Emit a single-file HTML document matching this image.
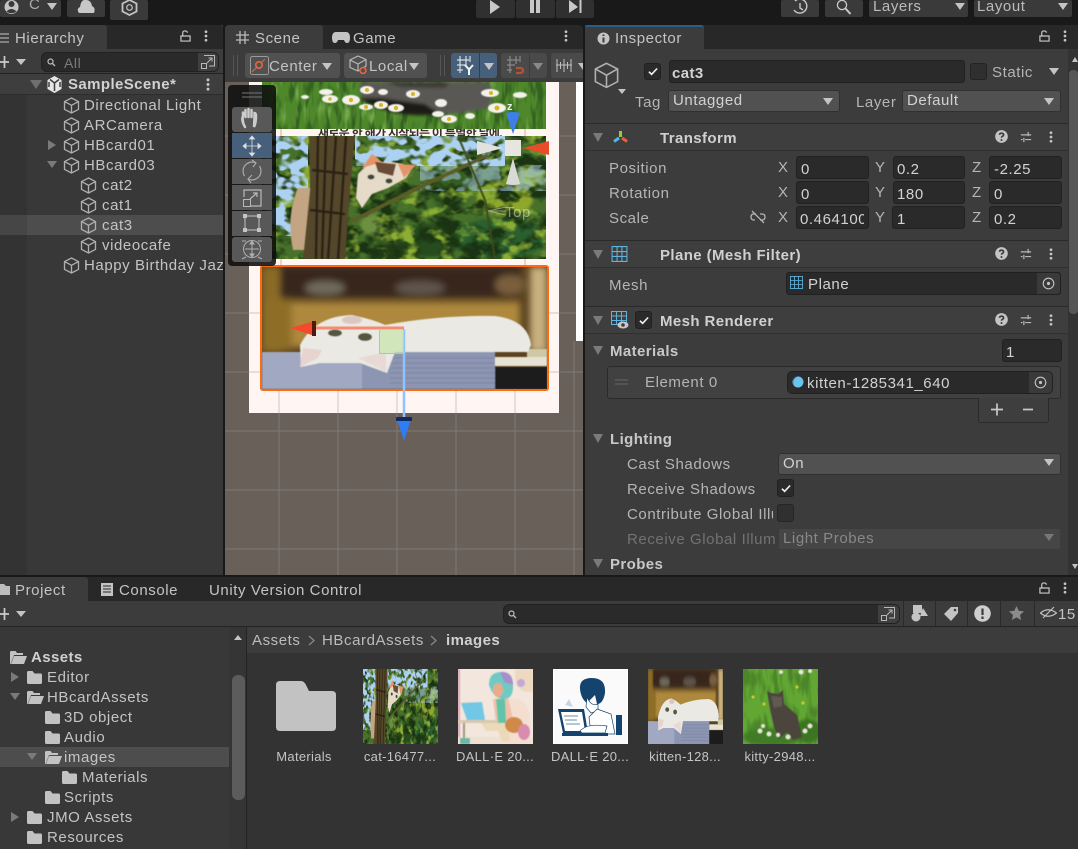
<!DOCTYPE html>
<html><head><meta charset="utf-8"><title>Unity Editor</title>
<style>
html,body{margin:0;padding:0;background:#191919}
#r{position:relative;width:1078px;height:849px;overflow:hidden;background:#191919;font-family:"Liberation Sans","Noto Sans CJK KR",sans-serif;font-size:15px;letter-spacing:.58px;color:#c4c4c4}
.a,.t,.f,.d,.b,svg.i{position:absolute;display:block}
.t{line-height:20px;height:20px;white-space:nowrap;margin-top:2px}
.bd{font-weight:bold;letter-spacing:.4px}
.dim{color:#bdbdbd}
.f{background:#2a2a2a;border:1px solid #212121;border-radius:3px;box-sizing:border-box;line-height:23px;padding-top:1px;padding-left:5px;overflow:hidden;white-space:nowrap;color:#d2d2d2}
.d{background:#515151;border:1px solid #303030;border-radius:3px;box-sizing:border-box;line-height:20px;padding-left:4px;color:#d2d2d2;white-space:nowrap}
.b{background:#3a3a3a;border-radius:2px}
.tr{position:absolute;width:0;height:0;border-left:5px solid transparent;border-right:5px solid transparent;border-top:7px solid #c4c4c4}
.trg{border-top-color:#7a7a7a}
.rt{position:absolute;width:0;height:0;border-top:5px solid transparent;border-bottom:5px solid transparent;border-left:8px solid #7a7a7a}
.l{font-size:13px;letter-spacing:.3px;text-align:center;width:90px;margin-top:0}
</style></head><body><div id="r">
<svg width="0" height="0" style="position:absolute"><defs>
<symbol id="cube" viewBox="0 0 17 17"><path d="M8.5 1 15.5 4.6V12.4L8.5 16 1.5 12.4V4.6ZM1.5 4.6 8.5 8.3 15.5 4.6M8.5 8.3V16" fill="none" stroke="#b0b0b0" stroke-width="1.3"/></symbol>
<symbol id="fold" viewBox="0 0 15 13"><path d="M0 1.5Q0 0 1.5 0H5.5L7.5 2.5H13.5Q15 2.5 15 4V11.5Q15 13 13.5 13H1.5Q0 13 0 11.5Z" fill="#c2c2c2"/></symbol>
<symbol id="open" viewBox="0 0 17 13"><path d="M0 1.5Q0 0 1.5 0H5.5L7 2H13V4H4L1 12V13H.8Q0 13 0 12Z" fill="#c2c2c2"/><path d="M4 5H17L14 13H1Z" fill="#c2c2c2"/></symbol>
<symbol id="keb" viewBox="0 0 4 14"><circle cx="2" cy="2" r="1.6" fill="#c4c4c4"/><circle cx="2" cy="7" r="1.6" fill="#c4c4c4"/><circle cx="2" cy="12" r="1.6" fill="#c4c4c4"/></symbol>
<symbol id="lock" viewBox="0 0 12 13"><path d="M1 6.5H11V12H1ZM3 6V3Q3 1 5.5 1T8 3" fill="none" stroke="#c8c8c8" stroke-width="1.3"/></symbol>
<symbol id="help" viewBox="0 0 14 14"><circle cx="7" cy="7" r="6.8" fill="#c4c4c4"/><path d="M4.8 5.2Q5 3.4 7 3.4 9.2 3.4 9.2 5.1 9.2 6.2 8 6.8 7 7.3 7 8.4" fill="none" stroke="#3c3c3c" stroke-width="1.8"/><circle cx="7" cy="10.8" r="1.1" fill="#3c3c3c"/></symbol>
<symbol id="sld" viewBox="0 0 14 14"><path d="M1 4.5H13M1 10H3M6 10H13M9.5 1V6M4.5 8V13" fill="none" stroke="#b8b8b8" stroke-width="1.4"/></symbol>
<symbol id="chk" viewBox="0 0 11 9"><path d="M1 4.8 4 7.6 10 1.2" fill="none" stroke="#eee" stroke-width="1.8"/></symbol>
<symbol id="grd" viewBox="0 0 17 17"><path d="M.6.6H16.4V16.4H.6ZM5.9.6V16.4M11.1.6V16.4M.6 5.9H16.4M.6 11.1H16.4" fill="none" stroke="#5fb5e0" stroke-width="1.1"/></symbol>
<symbol id="tgt" viewBox="0 0 14 14"><circle cx="7" cy="7" r="5.7" fill="none" stroke="#c4c4c4" stroke-width="1.2"/><circle cx="7" cy="7" r="1.7" fill="#c4c4c4"/></symbol>
<filter id="b1"><feGaussianBlur stdDeviation=".6"/></filter>
<filter id="b2"><feGaussianBlur stdDeviation="1.6"/></filter>
<filter id="b4"><feGaussianBlur stdDeviation="3.5"/></filter>
<filter id="nd" x="0" y="0" width="100%" height="100%" color-interpolation-filters="sRGB"><feTurbulence type="fractalNoise" baseFrequency=".05 .07" numOctaves="3" seed="7"/><feColorMatrix values="0 0 0 0 .1 0 0 0 0 .2 0 0 0 0 .07 4.500 0 0 0 -1.900"/></filter>
<filter id="ns" x="0" y="0" width="100%" height="100%" color-interpolation-filters="sRGB"><feTurbulence type="fractalNoise" baseFrequency=".07 .1" numOctaves="2" seed="21"/><feColorMatrix values="0 0 0 0 .68 0 0 0 0 .82 0 0 0 0 .95 8 0 0 0 -3.400"/></filter>
<filter id="nl" x="0" y="0" width="100%" height="100%" color-interpolation-filters="sRGB"><feTurbulence type="fractalNoise" baseFrequency=".05 .07" numOctaves="3" seed="33"/><feColorMatrix values="0 0 0 0 .55 0 0 0 0 .68 0 0 0 0 .2 5 0 0 0 -2.700"/></filter>
<filter id="gd" x="0" y="0" width="100%" height="100%" color-interpolation-filters="sRGB"><feTurbulence type="fractalNoise" baseFrequency=".16 .04" numOctaves="2" seed="5"/><feColorMatrix values="0 0 0 0 .2 0 0 0 0 .38 0 0 0 0 .12 4 0 0 0 -1.800"/></filter>
<filter id="gl" x="0" y="0" width="100%" height="100%" color-interpolation-filters="sRGB"><feTurbulence type="fractalNoise" baseFrequency=".16 .04" numOctaves="2" seed="12"/><feColorMatrix values="0 0 0 0 .46 0 0 0 0 .66 0 0 0 0 .3 4 0 0 0 -2.300"/></filter>

<symbol id="imgtree" viewBox="262 136 284 123" preserveAspectRatio="none">
<rect x="262" y="136" width="284" height="123" fill="#47702a"/>
<g filter="url(#b2)">
<ellipse cx="505" cy="198" rx="28" ry="18" fill="#8fa82c"/><ellipse cx="525" cy="172" rx="20" ry="14" fill="#82a044"/>
<ellipse cx="500" cy="238" rx="48" ry="20" fill="#2a5f2d"/><ellipse cx="430" cy="240" rx="30" ry="17" fill="#284c1e"/><ellipse cx="395" cy="252" rx="26" ry="9" fill="#223c17"/>
<ellipse cx="450" cy="190" rx="18" ry="24" fill="#365c20"/><ellipse cx="380" cy="225" rx="20" ry="12" fill="#6d9040"/>
</g>
<rect x="262" y="136" width="284" height="123" filter="url(#nd)"/>
<rect x="262" y="136" width="284" height="123" filter="url(#nl)"/>
<rect x="262" y="136" width="46" height="100" filter="url(#ns)"/>
<rect x="355" y="136" width="150" height="30" filter="url(#ns)"/>
<rect x="420" y="165" width="126" height="26" filter="url(#ns)" opacity=".5"/>
<g filter="url(#b1)">
<path d="M293 250Q286 215 298 188L312 188 310 250Z" fill="#c4a583"/>
<path d="M309 136H355L350 190 345 259H303L310 190Z" fill="#544729"/>
<path d="M318 136 316 259M326 136 322 259M336 136 328 259M346 136 338 259M312 170 348 174M310 210 345 214" stroke="#2a2313" stroke-width="2.500" fill="none"/>
<path d="M350 222 420 187 488 155" stroke="#5d5b25" stroke-width="3.500" fill="none"/>
<path d="M458 136 485 200 495 259" stroke="#3c4a1a" stroke-width="2" fill="none"/>
<path d="M356 198 358 174 370 162 392 162 414 166 406 178 388 188 372 194 362 208Z" fill="#e6dac8"/>
<path d="M362 168 372 154 382 162Z" fill="#e59468"/><path d="M398 164 416 165 404 178Z" fill="#e59468"/>
<path d="M375 162 396 164 393 176 378 172Z" fill="#6a4c34"/>
<ellipse cx="371" cy="177" rx="3.500" ry="2.500" fill="#3e4636"/><ellipse cx="389" cy="181" rx="3.500" ry="2.500" fill="#3e4636"/>
</g>
</symbol>

<symbol id="imgcat" viewBox="262 267 285 122" preserveAspectRatio="none">
<rect x="262" y="267" width="285" height="122" fill="#5a4220"/>
<g filter="url(#b4)">
<rect x="262" y="267" width="20" height="85" fill="#8b6a26"/>
<rect x="280" y="267" width="240" height="30" fill="#37281a"/>
<ellipse cx="325" cy="288" rx="20" ry="7" fill="#6f695c"/><ellipse cx="420" cy="288" rx="25" ry="7" fill="#5f544b"/><ellipse cx="510" cy="285" rx="15" ry="10" fill="#7a5f3e"/>
<rect x="280" y="302" width="240" height="45" fill="#ad883c"/>
<rect x="530" y="267" width="17" height="85" fill="#c7b07e"/>
<rect x="262" y="300" width="30" height="50" fill="#8e6e25"/>
</g>
<g filter="url(#b1)">
<rect x="262" y="352" width="233" height="37" fill="#8c95b2"/>
<rect x="262" y="352" width="100" height="37" fill="#a0a8c2"/>
<path d="M390 358H495M390 363H495M390 368H495M390 373H495M390 378H495M390 383H495" stroke="#7c85a0" stroke-width="1"/>
<rect x="495" y="367" width="52" height="22" fill="#1b1a1e"/>
<rect x="495" y="357" width="52" height="9" fill="#e6e3d4"/>
<rect x="527" y="349" width="20" height="8" fill="#cfc8a6"/>
<path d="M300 345Q315 316 352 315 375 320 385 325 440 315 495 316 528 320 531 345L528 352H395L387 373 360 363H320L301 367Z" fill="#ebe9e4"/>
<path d="M303 348 300 367 318 358 322 350Z" fill="#e7d3d0"/>
<path d="M358 358 386 372 386 352Z" fill="#e7d9d6"/>
<ellipse cx="335" cy="333" rx="7" ry="3.500" fill="#55553f"/><ellipse cx="365" cy="337" rx="7" ry="4" fill="#55553f"/>
<ellipse cx="352" cy="320" rx="10" ry="4" fill="#dcc6c2"/>
</g>
</symbol>
</defs></svg>

<!-- top bar -->
<div class="b" style="left:0;top:0;width:61px;height:17px"></div>
<svg class="i" style="left:4px;top:0" width="15" height="15" viewBox="0 0 15 15"><path d="M7.5 0A7 7 0 1 0 7.6 14 7 7 0 0 0 7.5 0Z" fill="#c4c4c4"/><circle cx="7.5" cy="4" r="3" fill="#3a3a3a"/><path d="M2.5 11.5Q7.5 6.5 12.5 11.5 7.5 15 2.5 11.5Z" fill="#3a3a3a"/></svg>
<div class="t" style="left:29px;top:-7px;color:#aaa">C</div><div class="tr" style="left:47px;top:3px"></div>
<div class="b" style="left:67px;top:0;width:38px;height:17px"></div>
<svg class="i" style="left:77px;top:0" width="19" height="13" viewBox="0 0 19 13"><path d="M2 13Q-1 9 3 7 4-1 9 0 14 0 15 6 19 8 17 13Z" fill="#c8c8c8"/></svg>
<div class="b" style="left:110px;top:0;width:38px;height:20px"></div>
<svg class="i" style="left:121px;top:0" width="17" height="16" viewBox="0 0 17 16"><path d="M8.5 0 15.5 3.5V11.500L8.500 15 1.500 11.500V3.500Z" fill="none" stroke="#c4c4c4" stroke-width="1.800"/><circle cx="8.500" cy="7.500" r="2.800" fill="none" stroke="#c4c4c4" stroke-width="1.200"/></svg>
<div class="b" style="left:476px;top:0;width:39px;height:18px;background:#303030"></div><div class="b" style="left:516px;top:0;width:39px;height:18px;background:#303030"></div><div class="b" style="left:556px;top:0;width:38px;height:18px;background:#303030"></div>
<svg class="i" style="left:489px;top:0" width="12" height="15" viewBox="0 0 12 15"><path d="M1 0 11 7 1 14Z" fill="#c8c8c8"/></svg>
<svg class="i" style="left:529px;top:0" width="12" height="14"><rect width="4" height="13" x="1" fill="#c8c8c8"/><rect width="4" height="13" x="7" fill="#c8c8c8"/></svg>
<svg class="i" style="left:569px;top:0" width="14" height="14"><path d="M0 0 9 7 0 13ZM10.500 0H12.500V13H10.500Z" fill="#c8c8c8"/></svg>
<div class="b" style="left:781px;top:0;width:38px;height:17px"></div>
<svg class="i" style="left:792px;top:0" width="16" height="16" viewBox="0 0 16 16"><path d="M3 1A7 7 0 1 1 2 10M8 3V8L11 10" fill="none" stroke="#c8c8c8" stroke-width="1.400"/></svg>
<div class="b" style="left:825px;top:0;width:38px;height:17px"></div>
<svg class="i" style="left:836px;top:0" width="16" height="16" viewBox="0 0 16 16"><circle cx="6" cy="5" r="4.600" fill="none" stroke="#c8c8c8" stroke-width="1.300"/><path d="M9.500 8.500 14.500 14" stroke="#c8c8c8" stroke-width="2"/></svg>
<div class="b" style="left:869px;top:0;width:99px;height:17px"></div><div class="t" style="left:873px;top:-5px;color:#bbb">Layers</div><div class="tr" style="left:955px;top:3px"></div>
<div class="b" style="left:974px;top:0;width:98px;height:17px"></div><div class="t" style="left:977px;top:-5px;color:#bbb">Layout</div><div class="tr" style="left:1058px;top:3px"></div>

<!-- hierarchy -->
<div class="a" style="left:0;top:25px;width:223px;height:550px;background:#383838"></div>
<div class="a" style="left:0;top:25px;width:223px;height:24px;background:#282828;border-radius:0 4px 0 0"></div>
<div class="a" style="left:0;top:25px;width:107px;height:25px;background:#3c3c3c;border-radius:0 3px 0 0"></div>
<div class="a" style="left:0;top:49px;width:223px;height:25px;background:#3c3c3c;border-bottom:1px solid #232323;box-sizing:border-box"></div>
<svg class="i" style="left:0;top:32px" width="10" height="12"><path d="M0 2H9M0 6H9M0 10H9" stroke="#aaa" stroke-width="1.300"/></svg>
<div class="t" style="left:15px;top:27px">Hierarchy</div>
<svg class="i" style="left:180px;top:30px" width="11" height="12"><use href="#lock"/></svg>
<svg class="i" style="left:204px;top:30px" width="4" height="12"><use href="#keb"/></svg>
<svg class="i" style="left:0;top:55px" width="10" height="14"><path d="M0 7H9M4.500 1V13" stroke="#ccc" stroke-width="1.700"/></svg>
<div class="tr" style="left:16px;top:59px;border-top-width:6px"></div>
<div class="a" style="left:41px;top:52px;width:178px;height:20px;background:#2a2a2a;border:1px solid #212121;border-radius:6px;box-sizing:border-box"></div>
<div class="a" style="left:198px;top:53px;width:20px;height:18px;background:#3f3f3f;border-radius:0 5px 5px 0"></div>
<svg class="i" style="left:201px;top:55px" width="14" height="14"><path d="M.5 8.500H5.500V13.500H.5ZM3 .5H13.500V11H8M6 8 11 3M7.500 3H11V6.500" fill="none" stroke="#b8b8b8" stroke-width="1"/></svg>
<svg class="i" style="left:47px;top:58px" width="12" height="9"><circle cx="3.500" cy="3.500" r="2.500" fill="none" stroke="#bbb" stroke-width="1.200"/><path d="M5 5 8 8" stroke="#bbb" stroke-width="1.300"/></svg>
<div class="t" style="left:64px;top:51px;color:#7d7d7d;font-size:14px">All</div>

<div class="a" style="left:0;top:74px;width:27px;height:501px;background:#333"></div>
<div class="a" style="left:0;top:74px;width:223px;height:21px;background:#3e3e3e;border-bottom:1px solid #2c2c2c;box-sizing:border-box"></div>
<div class="a" style="left:0;top:215px;width:27px;height:20px;background:#464646"></div>
<div class="a" style="left:27px;top:215px;width:196px;height:20px;background:#4d4d4d"></div>
<div class="tr trg" style="left:30px;top:80px;border-left-width:6px;border-right-width:6px;border-top-width:9px;border-top-color:#6f6f6f"></div>
<svg class="i" style="left:46px;top:76px" width="17" height="17" viewBox="0 0 17 17"><path d="M8.500 0 15.500 4V13L8.500 17 1.500 13V4Z" fill="#e6e6e6"/><path d="M8.500 7 4 3.500M8.500 7 13 3.500M8.500 7V15M3 6V11M14 6V11" stroke="#3e3e3e" stroke-width="1.500" fill="none"/></svg>
<div class="t bd" style="left:68px;top:73px;color:#d2d2d2">SampleScene*</div>
<svg class="i" style="left:206px;top:78px" width="4" height="13"><use href="#keb"/></svg>
<svg class="i" style="left:63px;top:97px" width="17" height="17"><use href="#cube"/></svg><div class="t" style="left:84px;top:94px">Directional Light</div>
<svg class="i" style="left:63px;top:117px" width="17" height="17"><use href="#cube"/></svg><div class="t" style="left:84px;top:114px">ARCamera</div>
<div class="rt" style="left:48px;top:140px"></div>
<svg class="i" style="left:63px;top:137px" width="17" height="17"><use href="#cube"/></svg><div class="t" style="left:84px;top:134px">HBcard01</div>
<div class="tr trg" style="left:47px;top:161px"></div>
<svg class="i" style="left:63px;top:157px" width="17" height="17"><use href="#cube"/></svg><div class="t" style="left:84px;top:154px">HBcard03</div>
<svg class="i" style="left:80px;top:177px" width="17" height="17"><use href="#cube"/></svg><div class="t" style="left:102px;top:174px">cat2</div>
<svg class="i" style="left:80px;top:197px" width="17" height="17"><use href="#cube"/></svg><div class="t" style="left:102px;top:194px">cat1</div>
<svg class="i" style="left:80px;top:217px" width="17" height="17"><use href="#cube"/></svg><div class="t" style="left:102px;top:214px">cat3</div>
<svg class="i" style="left:80px;top:237px" width="17" height="17"><use href="#cube"/></svg><div class="t" style="left:102px;top:234px">videocafe</div>
<svg class="i" style="left:63px;top:257px" width="17" height="17"><use href="#cube"/></svg><div class="a" style="left:84px;top:254px;width:139px;height:23px;overflow:hidden"><div class="t" style="left:0;top:0">Happy Birthday Jazz</div></div>

<!-- scene -->
<div class="a" style="left:225px;top:25px;width:358px;height:24px;background:#282828;border-radius:4px 4px 0 0"></div>
<div class="a" style="left:225px;top:25px;width:98px;height:25px;background:#3c3c3c;border-radius:4px 3px 0 0"></div>
<svg class="i" style="left:236px;top:31px" width="13" height="13"><path d="M4 0V13M9 0V13M0 4H13M0 9H13" stroke="#bbb" stroke-width="1.300"/></svg>
<div class="t" style="left:255px;top:27px">Scene</div>
<svg class="i" style="left:332px;top:32px" width="18" height="11" viewBox="0 0 18 11"><path d="M4 0H14Q18 0 18 6 18 11 15 11 13 11 12 8H6Q5 11 3 11 0 11 0 6 0 0 4 0Z" fill="#c4c4c4"/></svg>
<div class="t" style="left:353px;top:27px">Game</div>
<svg class="i" style="left:564px;top:30px" width="4" height="12"><use href="#keb"/></svg>
<div class="a" style="left:225px;top:49px;width:358px;height:33px;background:#3c3c3c"></div>
<div class="a" style="left:233px;top:55px;width:5px;height:21px;border-left:1px solid #555;border-right:1px solid #555;box-sizing:border-box"></div>
<div class="a" style="left:245px;top:53px;width:95px;height:25px;background:#515151;border-radius:3px"></div>
<svg class="i" style="left:250px;top:56px" width="19" height="19" viewBox="0 0 19 19"><rect x=".5" y=".5" width="18" height="18" rx="2" fill="none" stroke="#9a9a9a"/><circle cx="9" cy="9" r="3.200" fill="none" stroke="#e8663c" stroke-width="1.600"/><path d="M2 16 7 11M11.500 6.500 15 3" stroke="#e8663c" stroke-width="1"/></svg>
<div class="t" style="left:269px;top:55px">Center</div><div class="tr" style="left:322px;top:63px"></div>
<div class="a" style="left:344px;top:53px;width:83px;height:25px;background:#515151;border-radius:3px"></div>
<svg class="i" style="left:349px;top:55px" width="20" height="21" viewBox="0 0 20 21"><path d="M9 1 17 4.500V11L9 16 1 12.500V5ZM1 5 9 9 17 4.500M9 9V16" fill="none" stroke="#b8b8b8" stroke-width="1.200"/><circle cx="14" cy="15.500" r="3" fill="#515151" stroke="#e8663c" stroke-width="1.600"/></svg>
<div class="t" style="left:369px;top:55px">Local</div><div class="tr" style="left:409px;top:63px"></div>
<div class="a" style="left:440px;top:55px;width:5px;height:21px;border-left:1px solid #555;border-right:1px solid #555;box-sizing:border-box"></div>
<div class="a" style="left:451px;top:53px;width:28px;height:25px;background:#46607c;border-radius:3px 0 0 3px"></div>
<div class="a" style="left:480px;top:53px;width:17px;height:25px;background:#46607c;border-radius:0 3px 3px 0"></div>
<svg class="i" style="left:456px;top:56px" width="19" height="19" viewBox="0 0 19 19"><path d="M1 4H13M1 9H10M1 14H7M4 0V17M10 0V11M14 0V6" stroke="#dcdcdc" stroke-width="1.200" fill="none"/><path d="M9 9 13 13.500 17 9M13 13.500V19" stroke="#f2f2f2" stroke-width="2" fill="none"/></svg>
<div class="tr" style="left:484px;top:63px"></div>
<div class="a" style="left:501px;top:53px;width:28px;height:25px;background:#4a4a4a;border-radius:3px 0 0 3px"></div>
<div class="a" style="left:530px;top:53px;width:17px;height:25px;background:#4a4a4a;border-radius:0 3px 3px 0"></div>
<svg class="i" style="left:506px;top:56px" width="19" height="19" viewBox="0 0 19 19"><path d="M1 4H13M1 9H9M1 14H6M4 0V17M10 0V8M14 0V6" stroke="#8a8a8a" stroke-width="1.200" fill="none"/><path d="M10 12H14Q17 12 17 14.500T14 17H10" fill="none" stroke="#b5532e" stroke-width="2.200"/></svg>
<div class="tr" style="left:533px;top:63px;border-top-color:#8a8a8a"></div>
<div class="a" style="left:551px;top:53px;width:32px;height:25px;background:#4a4a4a;border-radius:3px 0 0 3px"></div>
<svg class="i" style="left:556px;top:58px" width="16" height="15"><path d="M1 1V14M4.500 4V11M8 1V14M11.500 4V11M15 1V14M0 7H16" stroke="#c0c0c0" stroke-width="1"/></svg>
<div class="tr" style="left:578px;top:63px;border-left-width:5px;border-right-width:0"></div>

<svg class="i" style="left:225px;top:82px" width="358" height="493" viewBox="225 82 358 493">
<rect x="225" y="82" width="358" height="493" fill="#686059"/>
<rect x="249" y="82" width="310" height="331" fill="#fff5f2"/>
<rect x="576" y="82" width="7" height="259" fill="#fff"/>
<g stroke="#7f7974" stroke-width="1">
<path d="M279 413V575M338 413V575M397 413V575M456 413V575M515 413V575M574 341V575M225 431H583M225 490H583M225 549H583M225 136H249M559 136H576M225 195H249M559 195H576M225 254H249M559 254H576M225 313H249M559 313H576M225 372H249M559 372H583"/>
</g>
<g stroke="#cfc8c6" stroke-width="1"><path d="M279 391V413M338 391V413M397 391V413M456 391V413M515 391V413M249 372H260M549 372H559M249 313H260M549 313H559"/></g>
<path d="M281 129V136M525 129V136M281 259V265M525 259V265" stroke="#f7cdbb" stroke-width="2"/>
<text x="318" y="137" font-family="'Liberation Sans','Noto Sans CJK KR',sans-serif" font-size="12" font-weight="bold" fill="#3a302c" letter-spacing="-.7">새로운 한 해가 시작되는 이 특별한 날에,</text>

<!-- daisy strip -->
<svg x="262" y="82" width="284" height="47" viewBox="262 82 284 47">
<rect x="262" y="82" width="284" height="47" fill="#4e882b"/>
<rect x="262" y="82" width="284" height="47" filter="url(#gd)"/>
<rect x="262" y="82" width="284" height="47" filter="url(#gl)"/>
<g filter="url(#b2)">
<path d="M360 82H488Q497 95 488 108 445 118 405 112 370 108 360 94Z" fill="#5a5854"/>
<path d="M385 82H450L445 88 400 87Z" fill="#3e3a37"/>
<path d="M358 98Q395 120 440 114L425 104 380 98Z" fill="#1d1f16"/>
</g>
<g filter="url(#b1)" fill="#f4f1ea">
<ellipse cx="326" cy="92" rx="7" ry="3"/><ellipse cx="330" cy="99" rx="8" ry="4"/><ellipse cx="351" cy="100" rx="9" ry="5"/><ellipse cx="367" cy="90" rx="7" ry="4"/><ellipse cx="366" cy="107" rx="7" ry="3"/><ellipse cx="381" cy="105" rx="7" ry="4"/><ellipse cx="383" cy="92" rx="5" ry="3"/><ellipse cx="396" cy="108" rx="8" ry="4"/><ellipse cx="413" cy="94" rx="7" ry="4"/><ellipse cx="441" cy="103" rx="6" ry="4"/><ellipse cx="449" cy="119" rx="8" ry="4"/><ellipse cx="490" cy="93" rx="9" ry="4"/><ellipse cx="497" cy="108" rx="9" ry="5"/><ellipse cx="520" cy="95" rx="7" ry="3"/><ellipse cx="438" cy="114" rx="6" ry="3"/><ellipse cx="470" cy="116" rx="5" ry="3"/><ellipse cx="305" cy="97" rx="4" ry="2"/>
</g>
<g fill="#d8b62a"><circle cx="330" cy="99" r="1.800"/><circle cx="351" cy="100" r="2.200"/><circle cx="366" cy="107" r="2"/><circle cx="381" cy="105" r="2"/><circle cx="396" cy="108" r="2.200"/><circle cx="413" cy="94" r="2"/><circle cx="367" cy="90" r="2"/><circle cx="449" cy="119" r="2"/><circle cx="497" cy="108" r="2.500"/><circle cx="491" cy="93" r="2"/></g>
</svg>

<use href="#imgtree" x="262" y="136" width="284" height="123"/>
<path d="M506 207 488 211 506 215M488 211H506" fill="none" stroke="#fff" stroke-opacity=".4"/>
<text x="505" y="217" font-family="'Liberation Sans',sans-serif" font-size="15" fill="#fff" fill-opacity=".45">Top</text>

<!-- cat3 -->
<rect x="260" y="265" width="289" height="126" rx="3" fill="#ff6a10"/>
<use href="#imgcat" x="262" y="267" width="285" height="122"/>

<!-- gizmos -->
<path d="M315 328H404" stroke="#f58c70" stroke-width="3"/>
<path d="M404 329V420" stroke="#8fc2ff" stroke-width="2.500"/>
<rect x="379" y="330" width="25" height="24" fill="#bfe6a0" fill-opacity=".6"/>
<path d="M379.500 330V353.500H404" stroke="#9be05a" fill="none"/>
<path d="M290 328 315 321V336Z" fill="#f4492a"/>
<rect x="312" y="321" width="4" height="15" fill="#4c1a12"/>
<path d="M397 419 411 419 404 441Z" fill="#2e7df5"/>
<rect x="396" y="417" width="16" height="4" rx="1" fill="#0f2a60"/>
<rect x="505" y="140" width="16" height="16" fill="#e6e5df"/>
<path d="M523 148 549 141V155Z" fill="#e84d2a"/>
<path d="M503 148 477 141V155Z" fill="#e2e1de"/>
<path d="M513 134 506 113Q513 111 520 113Z" fill="#3d7ee8"/>
<path d="M513 158 506 184Q513 186 520 184Z" fill="#d9d9d6"/>
<text x="507" y="110" font-family="'Liberation Sans',sans-serif" font-size="11" font-weight="bold" fill="#eee">z</text>

<!-- tool panel -->
<rect x="228" y="85" width="48" height="181" rx="4" fill="#0e0e0e" fill-opacity=".88"/>
<path d="M242 93H262M242 97H262" stroke="#777" stroke-width="1"/>
<g fill="#585858"><rect x="232" y="107" width="40" height="25" rx="3"/><rect x="232" y="159" width="40" height="25"/><rect x="232" y="185" width="40" height="25"/><rect x="232" y="211" width="40" height="25"/><rect x="232" y="237" width="40" height="25" rx="3"/></g>
<rect x="232" y="133" width="40" height="25" fill="#46607c"/>
<path d="M245 127Q241 120 243 116V112.500M245.500 117V110M248.500 117V109M251.500 117V110M254.500 118V113Q256 113 256 116 256 123 254 127Z" stroke="#ccc" stroke-width="2.500" fill="#ccc" stroke-linecap="round"/>
<path d="M252 139V153M245 146H259M252 136 249.500 139H254.500ZM252 156 249.500 153H254.500ZM243 146 246 143.500V148.500ZM261 146 258 143.500V148.500Z" stroke="#e0e0e0" fill="#e0e0e0" stroke-width=".8"/>
<path d="M244.500 176A9 9 0 0 1 256 163M252 160 256 163 253 167M259.500 166A9 9 0 0 1 248 179M252 175 248 179 251 183" stroke="#aaa" stroke-width="1.200" fill="none"/>
<path d="M244 197V190H261V206H251" stroke="#b8b8b8" fill="none" stroke-width="1.200"/><rect x="243.500" y="199.500" width="7" height="7" fill="none" stroke="#b8b8b8"/><path d="M250 199 257 193M253 193H257V197" stroke="#b8b8b8" fill="none" stroke-width="1.200"/>
<rect x="245" y="216" width="14" height="14" fill="none" stroke="#c4c4c4"/><g fill="#c4c4c4"><rect x="243" y="214" width="4" height="4"/><rect x="257" y="214" width="4" height="4"/><rect x="243" y="228" width="4" height="4"/><rect x="257" y="228" width="4" height="4"/></g>
<circle cx="252" cy="249" r="8.500" fill="none" stroke="#b0b0b0"/><path d="M252 242V256M245 249H259M252 241 250 244H254ZM252 257 250 254H254Z" stroke="#b0b0b0" fill="#b0b0b0"/>
<path d="M242 241H246M262 241H258M242 259 246 257M262 259 258 257" stroke="#b0b0b0"/>
</svg>

<!-- inspector -->
<div class="a" style="left:585px;top:25px;width:493px;height:550px;background:#3c3c3c"></div>
<div class="a" style="left:585px;top:25px;width:493px;height:24px;background:#282828;border-radius:4px 0 0 0"></div>
<div class="a" style="left:585px;top:25px;width:119px;height:25px;background:#3c3c3c;border-top:2px solid #2c5d87;box-sizing:border-box;border-radius:3px 3px 0 0"></div>
<svg class="i" style="left:597px;top:32px" width="13" height="13"><circle cx="6.500" cy="6.500" r="6" fill="#c4c4c4"/><path d="M6.500 5.500V10.500M6.500 2.500V4" stroke="#3c3c3c" stroke-width="2"/></svg>
<div class="t" style="left:615px;top:27px">Inspector</div>
<svg class="i" style="left:1039px;top:30px" width="11" height="12"><use href="#lock"/></svg>
<svg class="i" style="left:1063px;top:30px" width="4" height="12"><use href="#keb"/></svg>
<div class="a" style="left:1068px;top:49px;width:10px;height:526px;background:#333"></div>
<div class="a" style="left:1069px;top:70px;width:9px;height:244px;background:#565656;border-radius:4px"></div>
<div class="tr" style="left:1072px;top:57px;border-top:0;border-bottom:5px solid #c4c4c4;border-left-width:3px;border-right-width:3px"></div>
<div class="tr" style="left:1072px;top:564px;border-top-width:5px;border-left-width:3px;border-right-width:3px"></div>

<svg class="i" style="left:593px;top:62px" width="27" height="27" viewBox="0 0 17 17"><path d="M8.500 .8 15.500 4.400V12.400L8.500 16 1.500 12.400V4.400ZM1.500 4.400 8.500 8.300 15.500 4.400M8.500 8.300V16" fill="none" stroke="#b0b0b0" stroke-width="1"/></svg>
<div class="tr" style="left:618px;top:89px;border-left-width:4px;border-right-width:4px;border-top-width:5px"></div>
<div class="a" style="left:644px;top:63px;width:17px;height:17px;background:#2a2a2a;border:1px solid #212121;box-sizing:border-box;border-radius:3px"></div><svg class="i" style="left:648px;top:67px" width="10" height="9"><use href="#chk"/></svg>
<div class="f bd" style="left:669px;top:60px;width:296px;height:23px;padding-left:2px">cat3</div>
<div class="a" style="left:970px;top:63px;width:17px;height:17px;background:#2f2f2f;border:1px solid #232323;box-sizing:border-box;border-radius:3px"></div>
<div class="t" style="left:992px;top:61px;color:#b5b5b5">Static</div><div class="tr" style="left:1049px;top:68px"></div>
<div class="t dim" style="left:635px;top:91px;color:#b5b5b5">Tag</div>
<div class="d" style="left:668px;top:90px;width:172px;height:22px">Untagged</div><div class="tr" style="left:823px;top:98px"></div>
<div class="t" style="left:856px;top:91px;color:#b5b5b5">Layer</div>
<div class="d" style="left:902px;top:90px;width:159px;height:22px">Default</div><div class="tr" style="left:1044px;top:98px"></div>

<div class="a" style="left:585px;top:123px;width:483px;height:28px;background:#3e3e3e;border-top:1px solid #2a2a2a;border-bottom:1px solid #303030;box-sizing:border-box"></div>
<div class="tr trg" style="left:593px;top:133px;border-top-width:9px"></div>
<svg class="i" style="left:612px;top:130px" width="17" height="15"><path d="M8.500 1V7" stroke="#8bd13d" stroke-width="3"/><path d="M7 8 2 11.500" stroke="#4fb6ee" stroke-width="3"/><path d="M10 8 15 11.500" stroke="#e8603a" stroke-width="3"/></svg>
<div class="t bd" style="left:660px;top:127px;color:#d0d0d0">Transform</div>
<svg class="i" style="left:995px;top:130px" width="13" height="13"><use href="#help"/></svg><svg class="i" style="left:1020px;top:131px" width="12" height="12"><use href="#sld"/></svg><svg class="i" style="left:1049px;top:131px" width="4" height="12"><use href="#keb"/></svg>

<div class="t" style="left:609px;top:157px;color:#b5b5b5">Position</div>
<div class="t" style="left:609px;top:182px;color:#b5b5b5">Rotation</div>
<div class="t" style="left:609px;top:207px;color:#b5b5b5">Scale</div>
<svg class="i" style="left:750px;top:210px" width="16" height="14" viewBox="0 0 16 14"><path d="M6 4H4Q1 4 1 7T4 10H5M10 4H12Q15 4 15 7T12 10H10M2 1 14 13" fill="none" stroke="#b5b5b5" stroke-width="1.300"/></svg>
<div class="t" style="left:778px;top:156px;color:#b5b5b5">X</div><div class="f" style="left:796px;top:156px;width:73px;height:23px;padding-left:4px">0</div>
<div class="t" style="left:875px;top:156px;color:#b5b5b5">Y</div><div class="f" style="left:893px;top:156px;width:72px;height:23px;padding-left:3px">0.2</div>
<div class="t" style="left:972px;top:156px;color:#b5b5b5">Z</div><div class="f" style="left:989px;top:156px;width:73px;height:23px;padding-left:4px">-2.25</div>
<div class="t" style="left:778px;top:181px;color:#b5b5b5">X</div><div class="f" style="left:796px;top:181px;width:73px;height:23px;padding-left:4px">0</div>
<div class="t" style="left:875px;top:181px;color:#b5b5b5">Y</div><div class="f" style="left:893px;top:181px;width:72px;height:23px;padding-left:3px">180</div>
<div class="t" style="left:972px;top:181px;color:#b5b5b5">Z</div><div class="f" style="left:989px;top:181px;width:73px;height:23px;padding-left:4px">0</div>
<div class="t" style="left:778px;top:206px;color:#b5b5b5">X</div><div class="f" style="left:796px;top:206px;width:73px;height:23px;padding-left:3px"><span style="display:inline-block;width:64px;overflow:hidden;vertical-align:top">0.464100</span></div>
<div class="t" style="left:875px;top:206px;color:#b5b5b5">Y</div><div class="f" style="left:892px;top:206px;width:73px;height:23px;padding-left:4px">1</div>
<div class="t" style="left:972px;top:206px;color:#b5b5b5">Z</div><div class="f" style="left:989px;top:206px;width:73px;height:23px;padding-left:4px">0.2</div>

<div class="a" style="left:585px;top:240px;width:483px;height:28px;background:#3e3e3e;border-top:1px solid #2a2a2a;border-bottom:1px solid #303030;box-sizing:border-box"></div>
<div class="tr trg" style="left:593px;top:250px;border-top-width:9px"></div>
<svg class="i" style="left:611px;top:246px" width="17" height="16"><use href="#grd"/></svg>
<div class="t bd" style="left:660px;top:244px;color:#d0d0d0">Plane (Mesh Filter)</div>
<svg class="i" style="left:995px;top:247px" width="13" height="13"><use href="#help"/></svg><svg class="i" style="left:1020px;top:248px" width="12" height="12"><use href="#sld"/></svg><svg class="i" style="left:1049px;top:248px" width="4" height="12"><use href="#keb"/></svg>
<div class="t" style="left:609px;top:274px;color:#b5b5b5">Mesh</div>
<div class="f" style="left:786px;top:272px;width:275px;height:23px;padding-top:0;padding-left:21px">Plane</div>
<svg class="i" style="left:790px;top:276px" width="13" height="13"><use href="#grd"/></svg>
<div class="a" style="left:1037px;top:273px;width:23px;height:21px;background:#3a3a3a;border-radius:0 3px 3px 0"></div>
<svg class="i" style="left:1042px;top:277px" width="13" height="13"><use href="#tgt"/></svg>

<div class="a" style="left:585px;top:306px;width:483px;height:28px;background:#3e3e3e;border-top:1px solid #2a2a2a;border-bottom:1px solid #303030;box-sizing:border-box"></div>
<div class="tr trg" style="left:593px;top:316px;border-top-width:9px"></div>
<svg class="i" style="left:611px;top:311px" width="18" height="18"><rect x=".5" y=".5" width="15" height="13" fill="none" stroke="#5fb5e0"/><path d="M5.500 .5V13M10.500 .5V13M.5 5H15.500M.5 9.500H15.500" stroke="#5fb5e0"/><ellipse cx="12" cy="14" rx="5.500" ry="3.500" fill="#c8c8c8"/><circle cx="12" cy="14" r="1.800" fill="#3e3e3e"/></svg>
<div class="a" style="left:635px;top:311px;width:17px;height:18px;background:#2a2a2a;border:1px solid #212121;box-sizing:border-box;border-radius:3px"></div><svg class="i" style="left:639px;top:316px" width="10" height="9"><use href="#chk"/></svg>
<div class="t bd" style="left:660px;top:310px;color:#d0d0d0">Mesh Renderer</div>
<svg class="i" style="left:995px;top:313px" width="13" height="13"><use href="#help"/></svg><svg class="i" style="left:1020px;top:314px" width="12" height="12"><use href="#sld"/></svg><svg class="i" style="left:1049px;top:314px" width="4" height="12"><use href="#keb"/></svg>

<div class="tr trg" style="left:593px;top:346px;border-top-width:9px"></div>
<div class="t bd" style="left:610px;top:340px;color:#c8c8c8">Materials</div>
<div class="f" style="left:1002px;top:339px;width:60px;height:23px;padding-left:3px">1</div>
<div class="a" style="left:607px;top:366px;width:454px;height:33px;background:#414141;border:1px solid #2a2a2a;box-sizing:border-box;border-radius:3px"></div>
<svg class="i" style="left:615px;top:379px" width="13" height="6"><path d="M0 1H13M0 5H13" stroke="#666"/></svg>
<div class="t" style="left:645px;top:371px;color:#b5b5b5">Element 0</div>
<div class="f" style="left:787px;top:371px;width:266px;height:23px;padding-top:0;padding-left:19px;border-radius:5px">kitten-1285341_640</div>
<svg class="i" style="left:792px;top:376px" width="12" height="12"><circle cx="6" cy="6" r="5.500" fill="#6cc3ee"/><path d="M1 5A5 5 0 0 1 10 2 5 5 0 0 0 3 10 5 5 0 0 1 1 5Z" fill="#2c5a78"/></svg>
<div class="a" style="left:1029px;top:372px;width:23px;height:21px;background:#3a3a3a;border-radius:0 4px 4px 0"></div>
<svg class="i" style="left:1034px;top:376px" width="13" height="13"><use href="#tgt"/></svg>
<div class="a" style="left:978px;top:398px;width:71px;height:25px;background:#3e3e3e;border:1px solid #2a2a2a;border-top:0;box-sizing:border-box;border-radius:0 0 3px 3px"></div>
<svg class="i" style="left:991px;top:403px" width="44" height="13"><path d="M0 6.500H12M6 .5V12.500M32 6.500H42" stroke="#c8c8c8" stroke-width="1.700"/></svg>

<div class="tr trg" style="left:593px;top:434px;border-top-width:9px"></div>
<div class="t bd" style="left:610px;top:428px;color:#c8c8c8">Lighting</div>
<div class="t" style="left:627px;top:453px;color:#b5b5b5">Cast Shadows</div>
<div class="d" style="left:778px;top:453px;width:283px;height:22px">On</div><div class="tr" style="left:1044px;top:459px"></div>
<div class="t" style="left:627px;top:478px;color:#b5b5b5">Receive Shadows</div>
<div class="a" style="left:777px;top:479px;width:17px;height:18px;background:#2a2a2a;border:1px solid #212121;box-sizing:border-box;border-radius:3px"></div><svg class="i" style="left:781px;top:484px" width="10" height="9"><use href="#chk"/></svg>
<div class="a" style="left:627px;top:503px;width:146px;height:23px;overflow:hidden"><div class="t" style="left:0;top:0;color:#b5b5b5">Contribute Global Illumination</div></div>
<div class="a" style="left:777px;top:504px;width:17px;height:18px;background:#303030;border:1px solid #262626;box-sizing:border-box;border-radius:3px"></div>
<div class="a" style="left:627px;top:528px;width:149px;height:23px;overflow:hidden"><div class="t" style="left:0;top:0;color:#727272">Receive Global Illum</div></div>
<div class="d" style="left:778px;top:528px;width:283px;height:22px;background:#464646;border-color:#3c3c3c;color:#888">Light Probes</div><div class="tr" style="left:1044px;top:534px;border-top-color:#777"></div>
<div class="tr trg" style="left:593px;top:559px;border-top-width:9px"></div>
<div class="t bd" style="left:610px;top:553px;color:#c8c8c8">Probes</div>

<!-- project -->
<div class="a" style="left:0;top:577px;width:1078px;height:272px;background:#383838"></div>
<div class="a" style="left:0;top:577px;width:1078px;height:24px;background:#282828"></div>
<div class="a" style="left:0;top:577px;width:88px;height:25px;background:#3c3c3c;border-radius:0 3px 0 0"></div>
<div class="a" style="left:0;top:601px;width:1078px;height:26px;background:#3c3c3c;border-bottom:1px solid #232323;box-sizing:border-box"></div>
<svg class="i" style="left:0;top:584px" width="10" height="11" viewBox="0 0 10 11"><path d="M0 0H4L6 2H10V11H0Z" fill="#bcbcbc"/></svg>
<div class="t" style="left:15px;top:579px">Project</div>
<svg class="i" style="left:101px;top:583px" width="12" height="13"><rect width="12" height="13" fill="#c4c4c4"/><path d="M2 3H10M2 6H10M2 9H10" stroke="#282828"/></svg>
<div class="t" style="left:119px;top:579px">Console</div>
<div class="t" style="left:209px;top:579px">Unity Version Control</div>
<svg class="i" style="left:1039px;top:582px" width="11" height="12"><use href="#lock"/></svg>
<svg class="i" style="left:1063px;top:582px" width="4" height="12"><use href="#keb"/></svg>
<svg class="i" style="left:0;top:607px" width="10" height="14"><path d="M0 7H9M4.500 1V13" stroke="#ccc" stroke-width="1.700"/></svg>
<div class="tr" style="left:16px;top:611px;border-top-width:6px"></div>
<div class="a" style="left:503px;top:604px;width:397px;height:20px;background:#2a2a2a;border:1px solid #212121;border-radius:6px;box-sizing:border-box"></div>
<svg class="i" style="left:508px;top:610px" width="10" height="9"><circle cx="3.500" cy="3.500" r="2.500" fill="none" stroke="#bbb" stroke-width="1.200"/><path d="M5 5 8 8" stroke="#bbb" stroke-width="1.300"/></svg>
<div class="a" style="left:878px;top:605px;width:21px;height:18px;background:#3f3f3f;border-radius:0 5px 5px 0"></div>
<svg class="i" style="left:881px;top:607px" width="14" height="14"><path d="M.5 8.500H5.500V13.500H.5ZM3 .5H13.500V11H8M6 8 11 3M7.500 3H11V6.500" fill="none" stroke="#b8b8b8"/></svg>
<div class="a" style="left:903px;top:601px;width:1px;height:25px;background:#2a2a2a"></div><div class="a" style="left:935px;top:601px;width:1px;height:25px;background:#2a2a2a"></div><div class="a" style="left:967px;top:601px;width:1px;height:25px;background:#2a2a2a"></div><div class="a" style="left:1000px;top:601px;width:1px;height:25px;background:#2a2a2a"></div><div class="a" style="left:1034px;top:601px;width:1px;height:25px;background:#2a2a2a"></div>
<svg class="i" style="left:910px;top:605px" width="18" height="17"><rect x="3" width="9" height="8" fill="#c4c4c4"/><circle cx="6" cy="12" r="4.500" fill="#c4c4c4"/><path d="M13 3 18 11H10Z" fill="#c4c4c4"/></svg>
<svg class="i" style="left:944px;top:607px" width="15" height="14" viewBox="0 0 15 14"><path d="M0 7 7 0H14V6L7 14Z" fill="#c4c4c4"/><circle cx="11" cy="3" r="1.300" fill="#3c3c3c"/></svg>
<svg class="i" style="left:974px;top:605px" width="17" height="17"><circle cx="8.500" cy="8.500" r="8.300" fill="#cfcfcf"/><path d="M8.500 3.500V10M8.500 11.500V14" stroke="#3c3c3c" stroke-width="2.200"/></svg>
<svg class="i" style="left:1009px;top:606px" width="15" height="14" viewBox="0 0 15 14"><path d="M7.500 0 9.700 4.800 15 5.400 11 9 12.100 14 7.500 11.400 2.900 14 4 9 0 5.400 5.300 4.800Z" fill="#8b8b8b"/></svg>
<svg class="i" style="left:1040px;top:606px" width="17" height="14"><path d="M.5 7Q8 .5 16.500 7 8 13.500 .5 7ZM3 12 14 1" fill="none" stroke="#c0c0c0" stroke-width="1.200"/></svg>
<div class="t" style="left:1058px;top:603px">15</div>

<div class="a" style="left:0;top:627px;width:229px;height:222px;background:#383838"></div>
<div class="a" style="left:229px;top:627px;width:17px;height:222px;background:#353535"></div>
<div class="a" style="left:232px;top:675px;width:13px;height:125px;background:#5c5c5c;border-radius:6px"></div>
<div class="tr" style="left:234px;top:635px;border-top:0;border-bottom:5px solid #c4c4c4;border-left-width:4px;border-right-width:4px"></div>
<div class="a" style="left:246px;top:627px;width:1px;height:222px;background:#232323"></div>
<div class="a" style="left:247px;top:627px;width:831px;height:222px;background:#333"></div>
<div class="a" style="left:247px;top:627px;width:831px;height:26px;background:#3c3c3c"></div>
<div class="t" style="left:252px;top:629px;color:#bcbcbc">Assets</div>
<svg class="i" style="left:308px;top:635px" width="8" height="11"><path d="M1 1 6 5.500 1 10" fill="none" stroke="#888" stroke-width="1.300"/></svg>
<div class="t" style="left:322px;top:629px;color:#bcbcbc">HBcardAssets</div>
<svg class="i" style="left:430px;top:635px" width="8" height="11"><path d="M1 1 6 5.500 1 10" fill="none" stroke="#888" stroke-width="1.300"/></svg>
<div class="t bd" style="left:446px;top:629px;color:#d0d0d0">images</div>

<div class="a" style="left:0;top:747px;width:229px;height:20px;background:#4d4d4d"></div>
<svg class="i" style="left:10px;top:651px" width="17" height="13"><use href="#open"/></svg><div class="t bd" style="left:31px;top:646px;color:#d0d0d0">Assets</div>
<div class="rt" style="left:11px;top:672px"></div><svg class="i" style="left:27px;top:671px" width="15" height="13"><use href="#fold"/></svg><div class="t" style="left:47px;top:666px">Editor</div>
<div class="tr trg" style="left:10px;top:693px"></div><svg class="i" style="left:27px;top:691px" width="17" height="13"><use href="#open"/></svg><div class="t" style="left:47px;top:686px">HBcardAssets</div>
<svg class="i" style="left:45px;top:711px" width="15" height="13"><use href="#fold"/></svg><div class="t" style="left:64px;top:706px">3D object</div>
<svg class="i" style="left:45px;top:731px" width="15" height="13"><use href="#fold"/></svg><div class="t" style="left:64px;top:726px">Audio</div>
<div class="tr trg" style="left:27px;top:753px"></div><svg class="i" style="left:45px;top:751px" width="17" height="13"><use href="#open"/></svg><div class="t" style="left:64px;top:746px">images</div>
<svg class="i" style="left:62px;top:771px" width="15" height="13"><use href="#fold"/></svg><div class="t" style="left:82px;top:766px">Materials</div>
<svg class="i" style="left:45px;top:791px" width="15" height="13"><use href="#fold"/></svg><div class="t" style="left:64px;top:786px">Scripts</div>
<div class="rt" style="left:11px;top:812px"></div><svg class="i" style="left:27px;top:811px" width="15" height="13"><use href="#fold"/></svg><div class="t" style="left:47px;top:806px">JMO Assets</div>
<svg class="i" style="left:27px;top:831px" width="15" height="13"><use href="#fold"/></svg><div class="t" style="left:47px;top:826px">Resources</div>

<!-- thumbs -->
<svg class="i" style="left:276px;top:681px" width="60" height="50" viewBox="0 0 60 50"><path d="M0 4Q0 0 4 0H25Q28 0 30 4L33 10H56Q60 10 60 14V46Q60 50 56 50H4Q0 50 0 46Z" fill="#c2c2c2"/></svg>
<div class="t l" style="left:259px;top:747px">Materials</div>

<svg class="i" style="left:363px;top:669px" width="75" height="75"><use href="#imgtree" width="75" height="75"/></svg>
<div class="t l" style="left:355px;top:747px">cat-16477...</div>

<svg class="i" style="left:458px;top:669px" width="75" height="75" viewBox="0 0 75 75"><rect width="75" height="75" fill="#f3e6dd"/><g filter="url(#b1)"><rect x="0" width="2" height="75" fill="#d8a8b8"/><path d="M57 0H75V23H68Q57 20 57 8Z" fill="#ecd9c0"/><circle cx="63" cy="14" r="4" fill="#c4a8d8"/><rect x="0" y="68" width="75" height="7" fill="#efe0d4"/>
<path d="M48 30Q70 26 72 50V74H50Z" fill="#f3ded0"/>
<path d="M35 30 50 29 56 54H38Z" fill="#f0c0a8"/><path d="M38 30H47L48 54H40Z" fill="#5fc4a8"/>
<path d="M23 54H50L52 72H44L40 62H28Z" fill="#ecd9b8"/>
<ellipse cx="56" cy="56" rx="9" ry="8" fill="#d08a46"/><ellipse cx="66" cy="63" rx="6" ry="8" fill="#d88cb0"/>
<path d="M31 16Q31 3 43 3 55 3 55 18 55 29 47 30 36 31 31 16Z" fill="#6fcac4"/><path d="M42 3Q55 2 55 16L46 13Z" fill="#a78fca"/>
<ellipse cx="40" cy="21" rx="5" ry="7" fill="#e8ac8a"/>
<path d="M3 34 24 33 27 51H9Z" fill="#72c7e4"/><rect x="0" y="51" width="40" height="3" fill="#d8c8ae"/><rect x="5" y="54" width="2" height="20" fill="#9c9a7a"/><rect x="2" y="69" width="10" height="6" fill="#69b8a8"/></g></svg>
<div class="t l" style="left:450px;top:747px">DALL·E 20...</div>

<svg class="i" style="left:553px;top:669px" width="75" height="75" viewBox="0 0 75 75"><rect width="75" height="75" fill="#fff"/><rect x="1" y="1" width="73" height="74" fill="#fafafa"/><path d="M27 20Q26 9 39 9 53 9 52 24 50 35 44 35L42 26 34 34Q28 30 27 20Z" fill="#14436e"/><path d="M34 28Q38 38 45 35L45 42 38 44 33 38Z" fill="#fff" stroke="#14436e" stroke-width=".7"/><path d="M44 40 58 45 62 65H38L36 48Z" fill="#fff" stroke="#14436e" stroke-width=".7"/><rect x="63" y="46" width="6" height="20" fill="#14436e"/><path d="M5 40H31L35 64H10Z" fill="#14436e"/><path d="M8 43H29L32 62H12Z" fill="#fff"/><path d="M11 47H25M12 51H24M13 55H27" stroke="#6d8cab"/><rect x="9" y="64" width="46" height="3" fill="#14436e"/><path d="M27 62Q34 54 54 57L52 64H29Z" fill="#fff" stroke="#14436e" stroke-width=".7"/><path d="M12 36 16 30 20 38Z" fill="#c8d6e4"/></svg>
<div class="t l" style="left:545px;top:747px">DALL·E 20...</div>

<svg class="i" style="left:648px;top:669px" width="75" height="75"><use href="#imgcat" width="75" height="75"/></svg>
<div class="t l" style="left:640px;top:747px">kitten-128...</div>

<svg class="i" style="left:743px;top:669px" width="75" height="75" viewBox="0 0 75 75"><rect width="75" height="75" fill="#62a633"/><rect width="75" height="75" filter="url(#gd)" opacity=".45"/><g filter="url(#b2)"><ellipse cx="30" cy="68" rx="30" ry="9" fill="#3f7c26"/><ellipse cx="65" cy="62" rx="14" ry="12" fill="#3b7424"/></g><g filter="url(#b1)"><path d="M24 22 28 24 35 25 40 21 41 35 54 46 59 68 50 71 44 63 36 70 31 58 27 40Z" fill="#4b443e"/><path d="M28 27 39 28 39 37 31 39Z" fill="#615a52"/><g fill="#e8e6d8"><circle cx="17" cy="62" r="2.500"/><circle cx="20" cy="57" r="2"/><circle cx="26" cy="65" r="2.500"/><circle cx="35" cy="66" r="2"/><circle cx="45" cy="68" r="2.500"/><circle cx="62" cy="62" r="2.500"/><circle cx="67" cy="57" r="2.500"/><circle cx="38" cy="3" r="2"/><circle cx="58" cy="3" r="2.500"/><circle cx="67" cy="2" r="2"/></g><g fill="#d8d42a"><circle cx="10" cy="28" r="1.500"/><circle cx="21" cy="35" r="1.500"/><circle cx="60" cy="34" r="1.500"/><circle cx="54" cy="18" r="1.500"/></g></g></svg>
<div class="t l" style="left:735px;top:747px">kitty-2948...</div>
</div></body></html>
